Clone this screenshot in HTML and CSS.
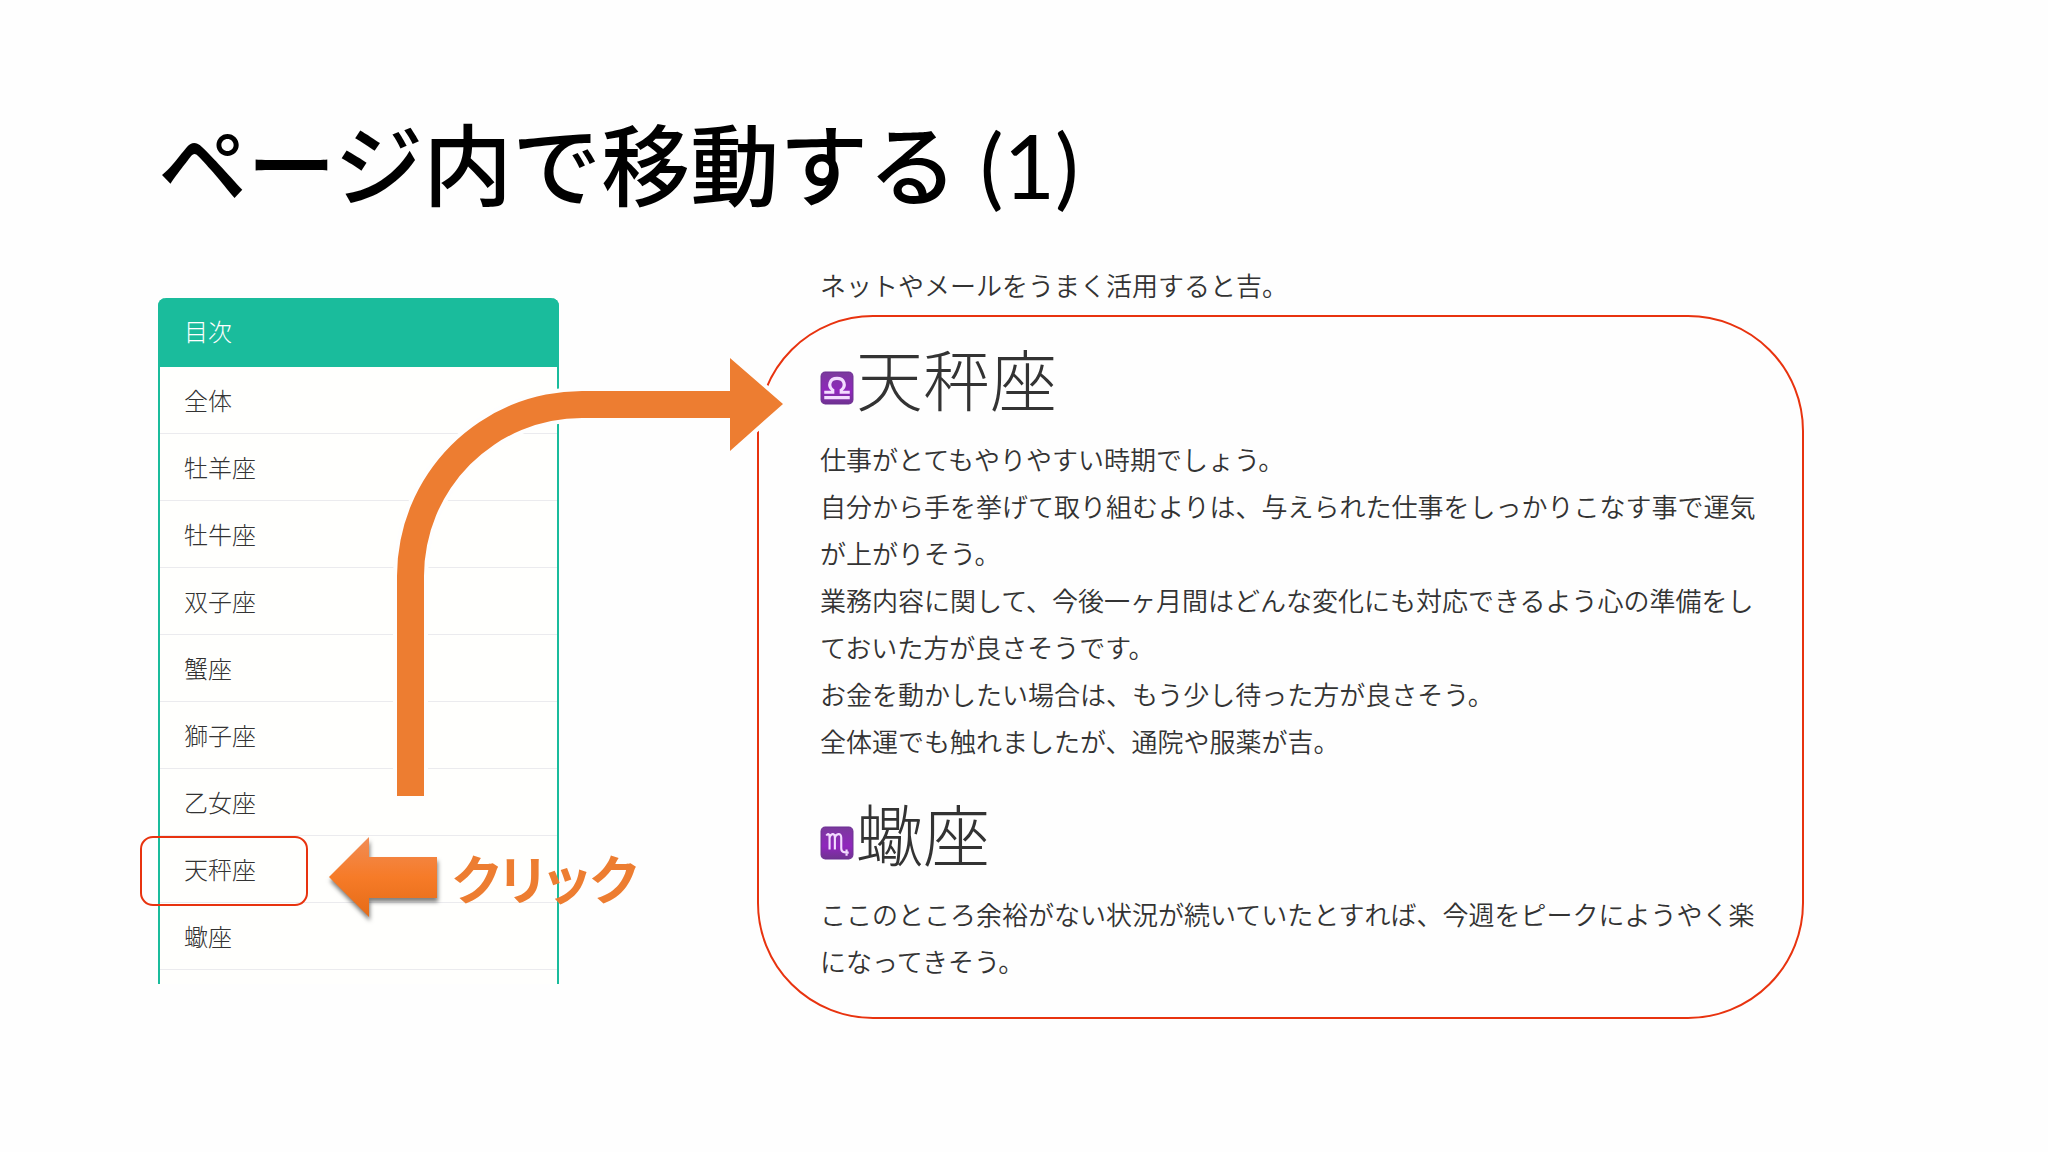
FILE: index.html
```html
<!DOCTYPE html>
<html lang="ja">
<head>
  <meta charset="UTF-8">
  <title>ページ内で移動する (1)</title>
  <link rel="stylesheet" href="styles.css">
</head>
<body>
<main class="slide">
  <h1 class="title">ページ内で移動する <span>(1)</span></h1>

  <div class="content">
    <nav class="toc">
      <h2 class="toc-title">目次</h2>
      <ul class="toc-list">
        <li><a href="#all">全体</a></li>
        <li><a href="#aries">牡羊座</a></li>
        <li><a href="#taurus">牡牛座</a></li>
        <li><a href="#gemini">双子座</a></li>
        <li><a href="#cancer">蟹座</a></li>
        <li><a href="#leo">獅子座</a></li>
        <li><a href="#virgo">乙女座</a></li>
        <li class="selected">
          <a href="#libra">天秤座</a>
          <div class="click">
            <svg class="click-arrow" width="108" height="82" viewBox="0 0 108 82" aria-hidden="true">
              <defs>
                <linearGradient id="orange" x1="0" y1="0" x2="0" y2="1">
                  <stop offset="0" stop-color="#f18c55"/>
                  <stop offset="0.5" stop-color="#f67b28"/>
                  <stop offset="1" stop-color="#e56b17"/>
                </linearGradient>
              </defs>
              <path d="M0 41 L40 1 V21 H108 V62 H40 V81 Z" fill="url(#orange)"/>
            </svg>
            <span>クリック</span>
          </div>
        </li>
        <li><a href="#scorpio">蠍座</a></li>
      </ul>
    </nav>

    <article class="page">
      <p class="lead">ネットやメールをうまく活用すると吉。</p>
      <div class="frame">
        <section id="libra">
          <h2 class="sign">
            <svg class="sign-icon" viewBox="0 0 32 32" aria-hidden="true">
              <defs>
                <linearGradient id="purple" x1="0" y1="0" x2="0" y2="1">
                  <stop offset="0" stop-color="#7a3a9c"/>
                  <stop offset="0.6" stop-color="#9026bd"/>
                  <stop offset="1" stop-color="#6f3390"/>
                </linearGradient>
              </defs>
              <rect class="tile" x="1" y="1" width="30" height="30" rx="4"/>
              <path class="mark" d="M4 20 H12 V18 C7 14 9 7 16 7 C23 7 25 14 20 18 V20 H28 M4 25 H28"/>
            </svg>天秤座
          </h2>
          <p>仕事がとてもやりやすい時期でしょう。<br>
          自分から手を挙げて取り組むよりは、与えられた仕事をしっかりこなす事で運気が上がりそう。<br>
          業務内容に関して、今後一ヶ月間はどんな変化にも対応できるよう心の準備をしておいた方が良さそうです。<br>
          お金を動かしたい場合は、もう少し待った方が良さそう。<br>
          全体運でも触れましたが、通院や服薬が吉。</p>
        </section>
        <section id="scorpio">
          <h2 class="sign">
            <svg class="sign-icon" viewBox="0 0 32 32" aria-hidden="true">
              <rect class="tile" x="1" y="1" width="30" height="30" rx="4"/>
              <path class="mark thin" d="M6 9 C8 6 9 8 9 11 V22 M9 11 C10 7 14 6 14 11 V22 M14 11 C15 7 20 6 20 11 V21 C20 25 23 25 27 25 M25 22 V28"/>
            </svg>蠍座
          </h2>
          <p>ここのところ余裕がない状況が続いていたとすれば、今週をピークにようやく楽になってきそう。</p>
        </section>
      </div>
    </article>

    <!-- arrow from the list to the heading it jumps to -->
    <svg class="jump-arrow" width="400" height="450" viewBox="0 0 400 450" aria-hidden="true">
      <path d="M8 446 V226 A185 185 0 0 1 193 41 H341 V8 L394 54 L341 101 V68 H193 A158 158 0 0 0 35 226 V446 Z"/>
    </svg>
  </div>
</main>
</body>
</html>
```
FILE: styles.css
```css
body {
  margin: 0;
  background: #fefefe;
  color: #333;
  font-family: "Noto Sans CJK JP", sans-serif;
}

.slide {
  padding: 100px 244px 0 158px;
}

.title {
  margin: 0;
  color: #000;
  font-family: "Lato", "Noto Sans CJK JP", sans-serif;
  font-size: 89px;
  font-weight: 500;
  line-height: 130px;
}

.title span {
  font-weight: 400;
}

.content {
  position: relative;
  display: grid;
  grid-template-columns: 401px 1fr;
  column-gap: 198px;
  align-items: start;
  margin-top: 32px;
}

/* table of contents */
.toc {
  box-sizing: border-box;
  margin-top: 36px;
  padding-bottom: 14px;
  border: solid #1abc9c;
  border-width: 0 2px;
  border-radius: 8px 8px 0 0;
  background: #fffffd;
}

.toc-title {
  margin: 0 -2px;
  padding: 0 26px 3px;
  border-radius: 8px 8px 0 0;
  background: #1abc9c;
  color: #fff;
  font-size: 24px;
  font-weight: 300;
  line-height: 66px;
}

.toc-list {
  margin: 0;
  padding: 0;
  list-style: none;
}

.toc-list li {
  position: relative;
  border-bottom: 1px solid #ebebee;
}

.toc-list a {
  display: block;
  padding: 0 24px 1px;
  color: #333;
  font-size: 24px;
  font-weight: 300;
  line-height: 65px;
  text-decoration: none;
}

.selected::before {
  content: "";
  position: absolute;
  left: -20px;
  top: 0;
  box-sizing: border-box;
  width: 168px;
  height: 70px;
  border: 2px solid #e8330f;
  border-radius: 13px;
}

.click {
  position: absolute;
  left: 169px;
  top: 0;
  z-index: 1;
  display: flex;
  align-items: center;
  gap: 15px;
  color: #ed7d31;
  font-size: 53px;
  font-weight: 700;
  line-height: 82px;
  white-space: nowrap;
  font-feature-settings: "palt";
}

.click-arrow {
  overflow: visible;
  filter: drop-shadow(1px 4px 2px rgba(0, 0, 0, 0.5));
}

/* page being shown */
.page p {
  margin: 0;
  font-size: 26px;
  font-weight: 350;
  line-height: 47px;
}

.page .lead {
  padding: 0 0 2px 63px;
  line-height: 45px;
}

.frame {
  margin-top: 6px;
  padding: 18px 40px 33px 61px;
  border: 2px solid #e8330f;
  border-radius: 116px;
}

.sign {
  display: flex;
  align-items: center;
  gap: 2px;
  margin: 0;
  padding-bottom: 16px;
  font-size: 67px;
  font-weight: 200;
  line-height: 84px;
}

#scorpio {
  margin-top: 26px;
}

.sign-icon {
  width: 34px;
  height: 34px;
  margin-top: 22px;
}

.tile {
  fill: url(#purple);
  stroke: #6b2c91;
}

.mark {
  fill: none;
  stroke: #f3dcff;
  stroke-width: 3;
}

.thin {
  stroke-width: 2;
}

.jump-arrow {
  position: absolute;
  left: 231px;
  top: 88px;
  fill: #ed7d31;
  stroke: #fefefe;
  stroke-width: 8px;
  paint-order: stroke;
  overflow: visible;
  pointer-events: none;
}
```
